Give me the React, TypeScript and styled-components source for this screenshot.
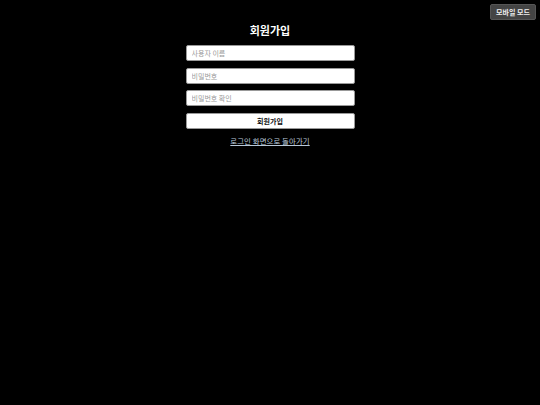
import styled, { createGlobalStyle } from 'styled-components';

const GlobalStyle = createGlobalStyle`
  html, body {
    margin: 0;
    padding: 0;
    background: #000;
  }
  body {
    font-family: 'Noto Sans CJK KR', 'Noto Sans', sans-serif;
  }
`;

const Page = styled.div`
  position: relative;
  width: 540px;
  height: 405px;
  background: #000;
  display: flex;
  justify-content: center;
`;

const ModeButton = styled.button`
  position: absolute;
  top: 4px;
  right: 4px;
  width: 46px;
  height: 16px;
  padding: 0;
  border: 1px solid #555;
  border-radius: 2px;
  background: #444;
  color: #eee;
  font-family: 'Noto Sans CJK KR', sans-serif;
  font-size: 7px;
  font-weight: 700;
  line-height: 14px;
  cursor: pointer;
`;

const Form = styled.form`
  width: 169px;
  margin-top: 22px;
  display: flex;
  flex-direction: column;
  align-items: stretch;
`;

const Title = styled.h1`
  margin: 0 0 7px;
  color: #fff;
  font-size: 11px;
  font-weight: 700;
  line-height: 16px;
  text-align: center;
`;

const Fields = styled.div`
  display: flex;
  flex-direction: column;
  gap: 6.5px;
`;

const Input = styled.input`
  box-sizing: border-box;
  height: 16px;
  padding: 0 5px;
  border: 1px solid #999;
  border-radius: 2px;
  background: #fff;
  font-family: 'Noto Sans CJK KR', sans-serif;
  font-size: 7px;
  outline: none;

  &::placeholder {
    color: #9a9a9a;
  }
`;

const Submit = styled.button`
  box-sizing: border-box;
  height: 16px;
  padding: 0;
  border: 1px solid #999;
  border-radius: 2px;
  background: #fff;
  color: #111;
  font-family: 'Noto Sans CJK KR', sans-serif;
  font-size: 7px;
  font-weight: 700;
  cursor: pointer;
`;

const BackLink = styled.a`
  margin-top: 7px;
  align-self: center;
  color: #b8c8d8;
  font-size: 7.4px;
  letter-spacing: 0.1px;
  line-height: 10px;
  text-decoration: underline;
  cursor: pointer;
`;

const App = () => {
  return (
    <>
      <GlobalStyle />
      <Page>
        <ModeButton type="button">모바일 모드</ModeButton>
        <Form onSubmit={(e) => e.preventDefault()}>
          <Title>회원가입</Title>
          <Fields>
            <Input type="text" placeholder="사용자 이름" />
            <Input type="password" placeholder="비밀번호" />
            <Input type="password" placeholder="비밀번호 확인" />
            <Submit type="submit">회원가입</Submit>
          </Fields>
          <BackLink>로그인 화면으로 돌아가기</BackLink>
        </Form>
      </Page>
    </>
  );
};

export default App;
